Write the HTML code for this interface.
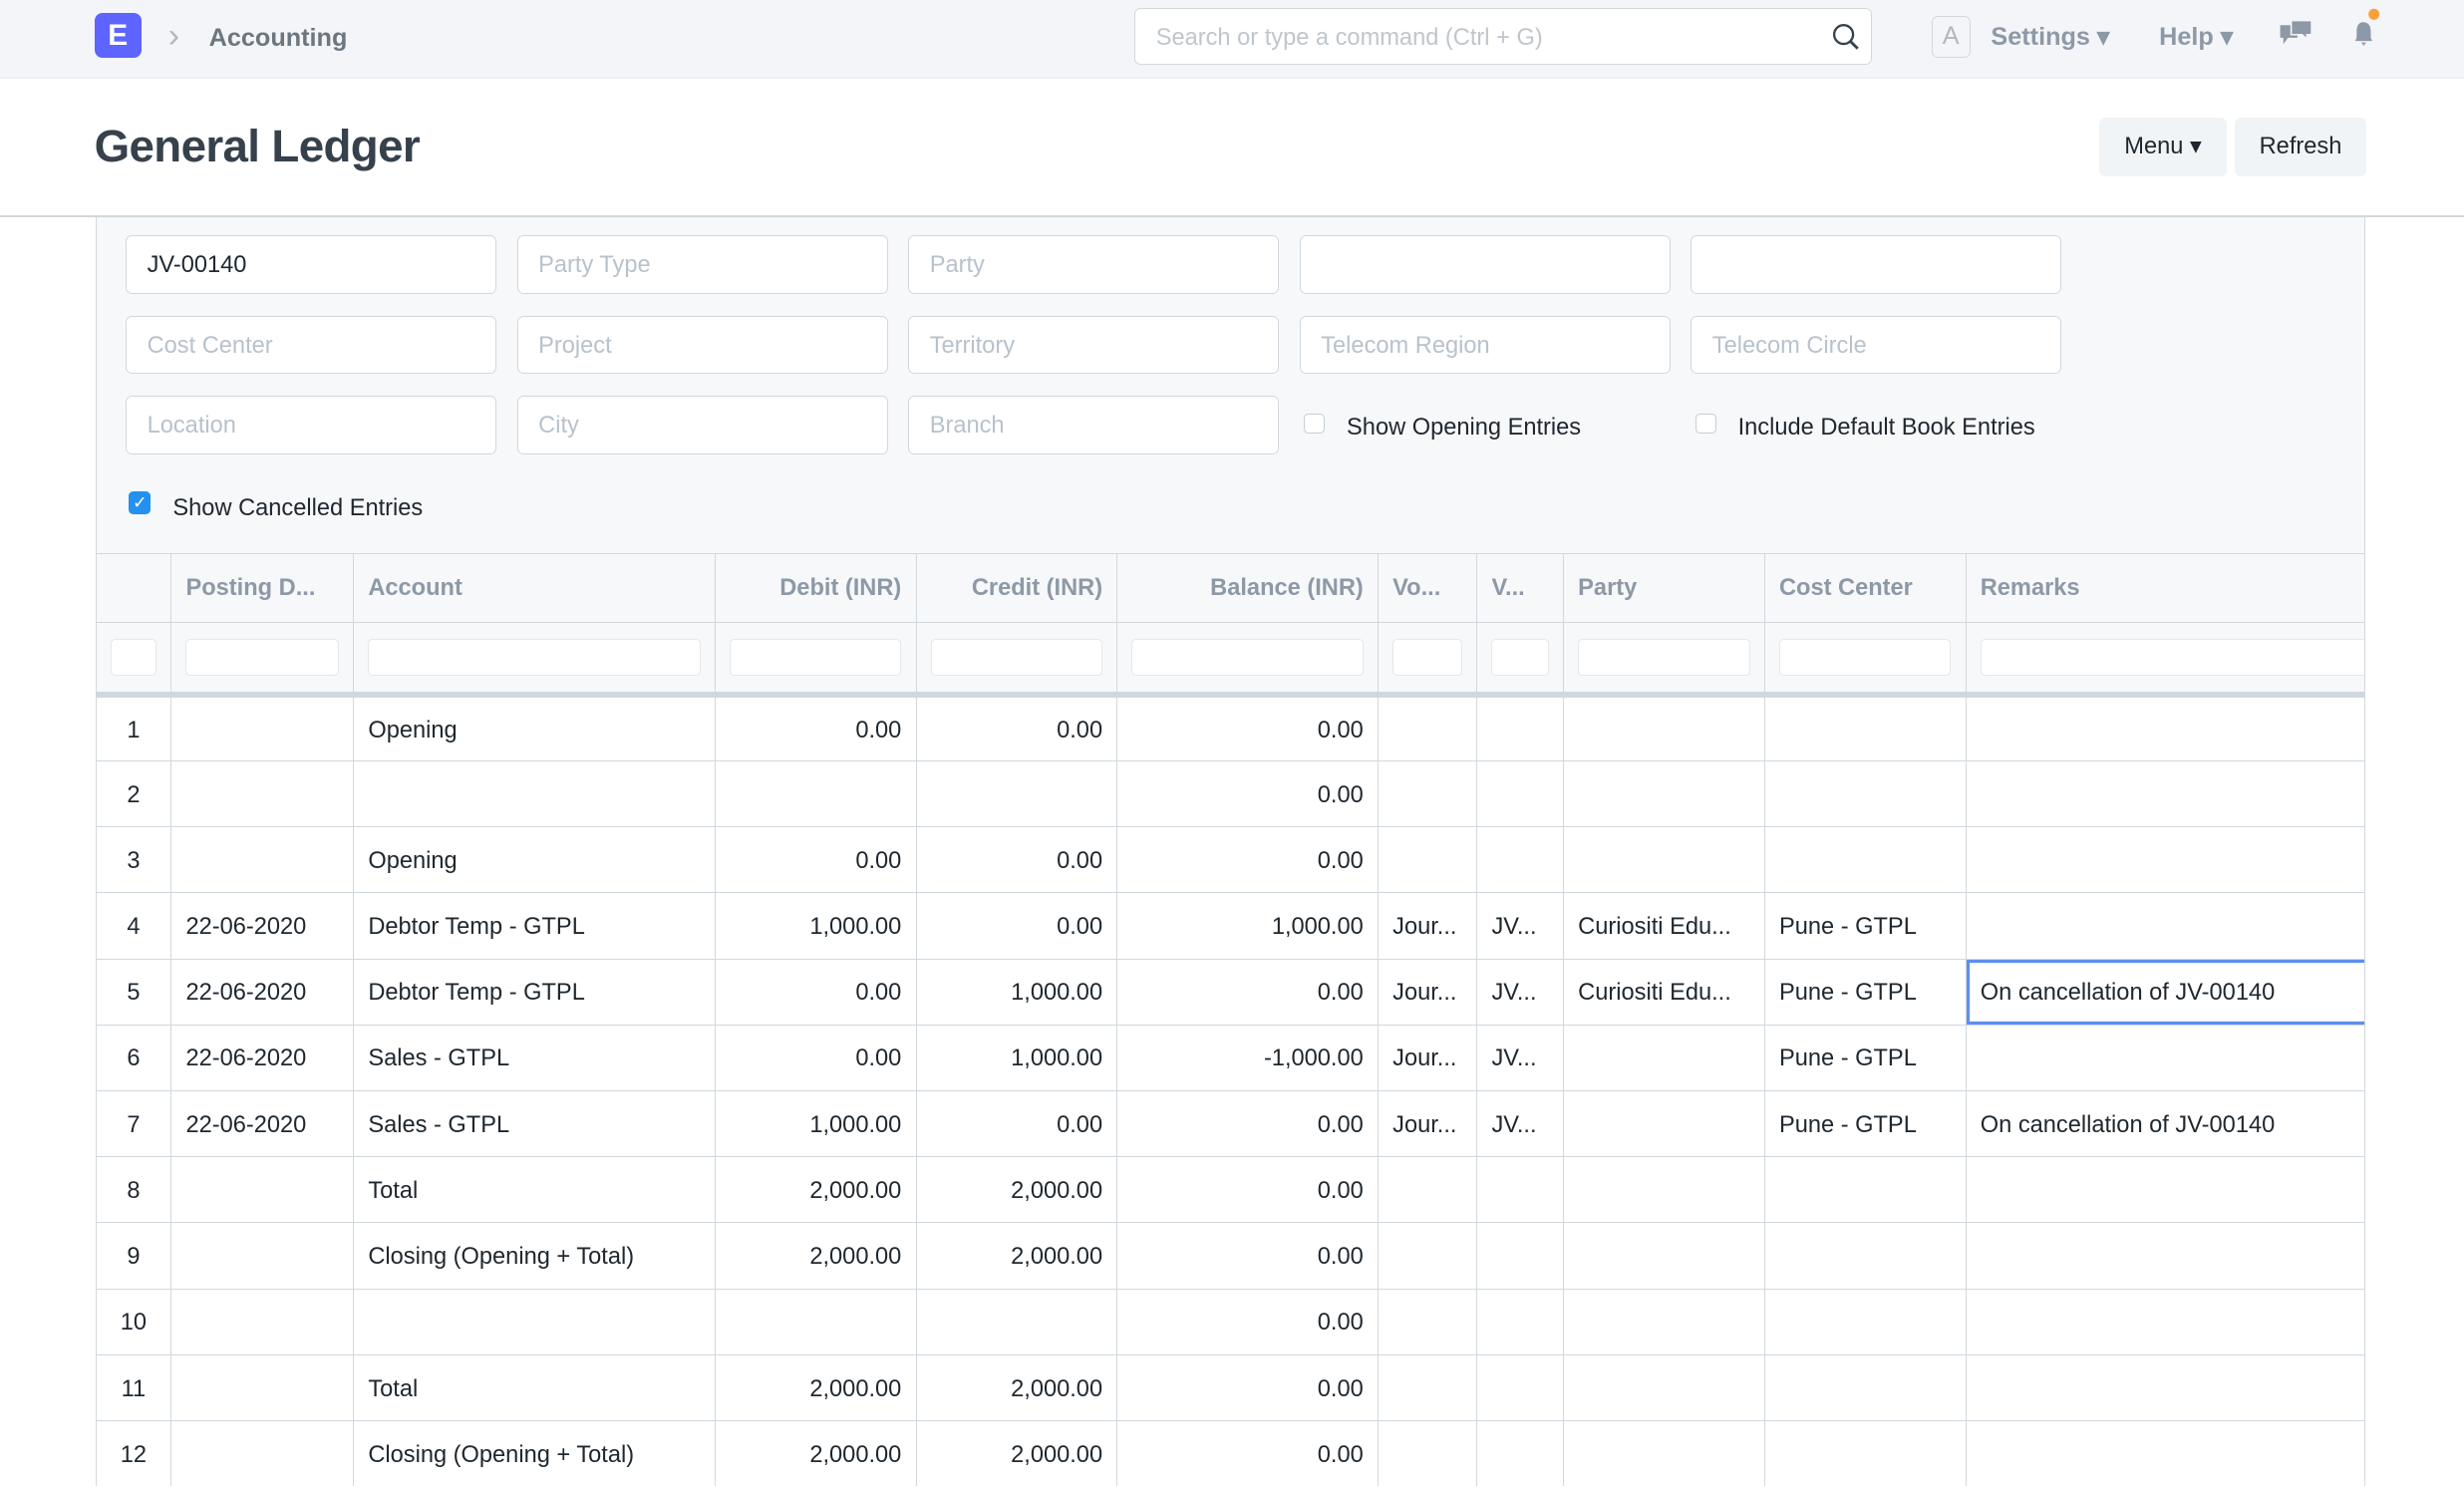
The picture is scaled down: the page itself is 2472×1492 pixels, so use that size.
<!DOCTYPE html>
<html><head><meta charset="utf-8"><style>
html,body{margin:0;padding:0;background:#fff;overflow:hidden;width:2472px;height:1492px}
#w{zoom:1.5765;width:1568px;height:946px;position:relative;font-family:"Liberation Sans",sans-serif;color:#1f272e;font-size:15px}
.a{position:absolute;box-sizing:border-box}
.nav{left:0;top:0;width:1568px;height:50px;background:#f4f5f8;border-bottom:1px solid #e8eaed}
.inp{background:#fff;border:1px solid #d1d8dd;border-radius:4px;height:37px;width:236px;padding:0 13px;line-height:38px;color:#b8c2cc;font-size:15px}
.cb{width:13px;height:13px;border:1px solid #c8ced3;border-radius:3px;background:#fff}
.grid{left:61px;top:352px;width:1444px;height:594px;border-left:1px solid #d1d8dd;border-right:1px solid #d1d8dd;overflow:hidden}
.t{position:absolute;top:0;left:0;border-collapse:collapse;table-layout:fixed}
.t tr{height:42px}
.t td{border:1px solid #d1d8dd;padding:2px 9px 0;white-space:nowrap;overflow:hidden;font-size:15px}
.t tr.h td{background:#f7f8fa;color:#8d99a6;font-weight:bold;padding-top:0}
.t tr.h{height:44px}
.t tr.f{height:46px}
.t tr.f td{background:#f7f8fa;border-bottom:4px solid #d1d8dd;padding-top:0}
.fi{height:22px;border:1px solid #e4e8eb;border-radius:3px;background:#fff}
.r{text-align:right}
.t td:first-child{text-align:center;padding-left:0;padding-right:0}
</style></head><body><div id="w">
<div class="a nav"></div>
<div class="a" style="left:60px;top:8px;width:30px;height:29px;background:#5e64ff;border-radius:5px;color:#fff;font-weight:bold;font-size:19px;text-align:center;line-height:29px">E</div>
<div class="a" style="left:107px;top:11px;color:#b0b8c0;font-size:22px">›</div>
<div class="a" style="left:133px;top:15px;color:#6c7680;font-weight:bold;font-size:16px">Accounting</div>
<div class="a" style="left:722px;top:5px;width:469px;height:36px;background:#fff;border:1px solid #d1d8dd;border-radius:4px;padding-left:13px;line-height:38px;color:#c0c6cc;font-size:15px">Search or type a command (Ctrl + G)</div>
<svg class="a" style="left:1165px;top:14px" width="20" height="20" viewBox="0 0 20 20"><circle cx="8" cy="8" r="6" fill="none" stroke="#36414c" stroke-width="1.5"/><path d="M12.5 12.5L17 17" stroke="#36414c" stroke-width="1.8"/></svg>
<div class="a" style="left:1229px;top:10px;width:25px;height:27px;border:1px solid #d1d8dd;border-radius:4px;text-align:center;line-height:25px;color:#b0b8c0;font-size:16px">A</div>
<div class="a" style="left:1267px;top:14px;color:#8d99a6;font-weight:bold;font-size:16px">Settings ▾</div>
<div class="a" style="left:1374px;top:14px;color:#8d99a6;font-weight:bold;font-size:16px">Help ▾</div>
<svg class="a" style="left:1450px;top:12px" width="22" height="20" viewBox="0 0 22 20"><path d="M1 4h11v8H6l-3 4v-4H1z" fill="#8d99a6"/><path d="M8 1h13v9h-3v3l-3-3H8z" fill="#8d99a6" stroke="#f4f5f8" stroke-width="1"/></svg>
<svg class="a" style="left:1496px;top:5px" width="20" height="26" viewBox="0 0 20 26"><circle cx="15" cy="4" r="3.5" fill="#f8a13b"/><path d="M8 9c-3 0-4 3-4 6v4l-1 2h11l-1-2v-4c0-3-1-6-5-6z M7 22h3l-1.5 2z" fill="#8d99a6"/></svg>
<div class="a" style="left:60px;top:77px;font-size:29px;font-weight:bold;color:#36414c;letter-spacing:-0.4px">General Ledger</div>
<div class="a" style="left:1336px;top:75px;width:81px;height:37px;background:#f0f4f7;border-radius:4px;text-align:center;line-height:38px;font-size:15px">Menu ▾</div>
<div class="a" style="left:1422px;top:75px;width:84px;height:37px;background:#f0f4f7;border-radius:4px;text-align:center;line-height:38px;font-size:15px">Refresh</div>
<div class="a" style="left:0;top:137px;width:1568px;height:1px;background:#d1d8dd"></div>
<div class="a" style="left:61px;top:138px;width:1444px;height:214px;background:#f7f8fa;border-left:1px solid #d1d8dd;border-right:1px solid #d1d8dd"></div>
<div class="a inp" style="left:80px;top:150px;color:#1f272e">JV-00140</div>
<div class="a inp" style="left:329px;top:150px">Party Type</div>
<div class="a inp" style="left:578px;top:150px">Party</div>
<div class="a inp" style="left:827px;top:150px"></div>
<div class="a inp" style="left:1076px;top:150px"></div>
<div class="a inp" style="left:80px;top:201px">Cost Center</div>
<div class="a inp" style="left:329px;top:201px">Project</div>
<div class="a inp" style="left:578px;top:201px">Territory</div>
<div class="a inp" style="left:827px;top:201px">Telecom Region</div>
<div class="a inp" style="left:1076px;top:201px">Telecom Circle</div>
<div class="a inp" style="left:80px;top:252px">Location</div>
<div class="a inp" style="left:329px;top:252px">City</div>
<div class="a inp" style="left:578px;top:252px">Branch</div>
<div class="a cb" style="left:830px;top:263px"></div>
<div class="a" style="left:857px;top:264px">Show Opening Entries</div>
<div class="a cb" style="left:1079px;top:263px"></div>
<div class="a" style="left:1106px;top:264px">Include Default Book Entries</div>
<div class="a" style="left:82px;top:313px;width:14px;height:14px;background:#2490ef;border-radius:3px;color:#fff;font-size:11px;text-align:center;line-height:14px">✓</div>
<div class="a" style="left:110px;top:315px">Show Cancelled Entries</div>
<div class="a grid">
<table class="t" style="width:1460px;margin-left:-1px">
<colgroup><col style="width:48px"><col style="width:116px"><col style="width:230px"><col style="width:128px"><col style="width:128px"><col style="width:166px"><col style="width:63px"><col style="width:55px"><col style="width:128px"><col style="width:128px"><col style="width:270px"></colgroup>
<tr class="h"><td></td><td>Posting D...</td><td>Account</td><td class="r">Debit (INR)</td><td class="r">Credit (INR)</td><td class="r">Balance (INR)</td><td>Vo...</td><td>V...</td><td>Party</td><td>Cost Center</td><td>Remarks</td></tr>
<tr class="f"><td style="padding:0 9px"><div class="fi"></div></td><td><div class="fi"></div></td><td><div class="fi"></div></td><td><div class="fi"></div></td><td><div class="fi"></div></td><td><div class="fi"></div></td><td><div class="fi"></div></td><td><div class="fi"></div></td><td><div class="fi"></div></td><td><div class="fi"></div></td><td><div class="fi"></div></td></tr>
<tr><td>1</td><td></td><td>Opening</td><td class="r">0.00</td><td class="r">0.00</td><td class="r">0.00</td><td></td><td></td><td></td><td></td><td></td></tr>
<tr><td>2</td><td></td><td></td><td></td><td></td><td class="r">0.00</td><td></td><td></td><td></td><td></td><td></td></tr>
<tr><td>3</td><td></td><td>Opening</td><td class="r">0.00</td><td class="r">0.00</td><td class="r">0.00</td><td></td><td></td><td></td><td></td><td></td></tr>
<tr><td>4</td><td>22-06-2020</td><td>Debtor Temp - GTPL</td><td class="r">1,000.00</td><td class="r">0.00</td><td class="r">1,000.00</td><td>Jour...</td><td>JV...</td><td>Curiositi Edu...</td><td>Pune - GTPL</td><td></td></tr>
<tr><td>5</td><td>22-06-2020</td><td>Debtor Temp - GTPL</td><td class="r">0.00</td><td class="r">1,000.00</td><td class="r">0.00</td><td>Jour...</td><td>JV...</td><td>Curiositi Edu...</td><td>Pune - GTPL</td><td style="box-shadow:inset 0 0 0 2px #5e8ff0">On cancellation of JV-00140</td></tr>
<tr><td>6</td><td>22-06-2020</td><td>Sales - GTPL</td><td class="r">0.00</td><td class="r">1,000.00</td><td class="r">-1,000.00</td><td>Jour...</td><td>JV...</td><td></td><td>Pune - GTPL</td><td></td></tr>
<tr><td>7</td><td>22-06-2020</td><td>Sales - GTPL</td><td class="r">1,000.00</td><td class="r">0.00</td><td class="r">0.00</td><td>Jour...</td><td>JV...</td><td></td><td>Pune - GTPL</td><td>On cancellation of JV-00140</td></tr>
<tr><td>8</td><td></td><td>Total</td><td class="r">2,000.00</td><td class="r">2,000.00</td><td class="r">0.00</td><td></td><td></td><td></td><td></td><td></td></tr>
<tr><td>9</td><td></td><td>Closing (Opening + Total)</td><td class="r">2,000.00</td><td class="r">2,000.00</td><td class="r">0.00</td><td></td><td></td><td></td><td></td><td></td></tr>
<tr><td>10</td><td></td><td></td><td></td><td></td><td class="r">0.00</td><td></td><td></td><td></td><td></td><td></td></tr>
<tr><td>11</td><td></td><td>Total</td><td class="r">2,000.00</td><td class="r">2,000.00</td><td class="r">0.00</td><td></td><td></td><td></td><td></td><td></td></tr>
<tr><td>12</td><td></td><td>Closing (Opening + Total)</td><td class="r">2,000.00</td><td class="r">2,000.00</td><td class="r">0.00</td><td></td><td></td><td></td><td></td><td></td></tr>
</table>
</div>
</div></body></html>
